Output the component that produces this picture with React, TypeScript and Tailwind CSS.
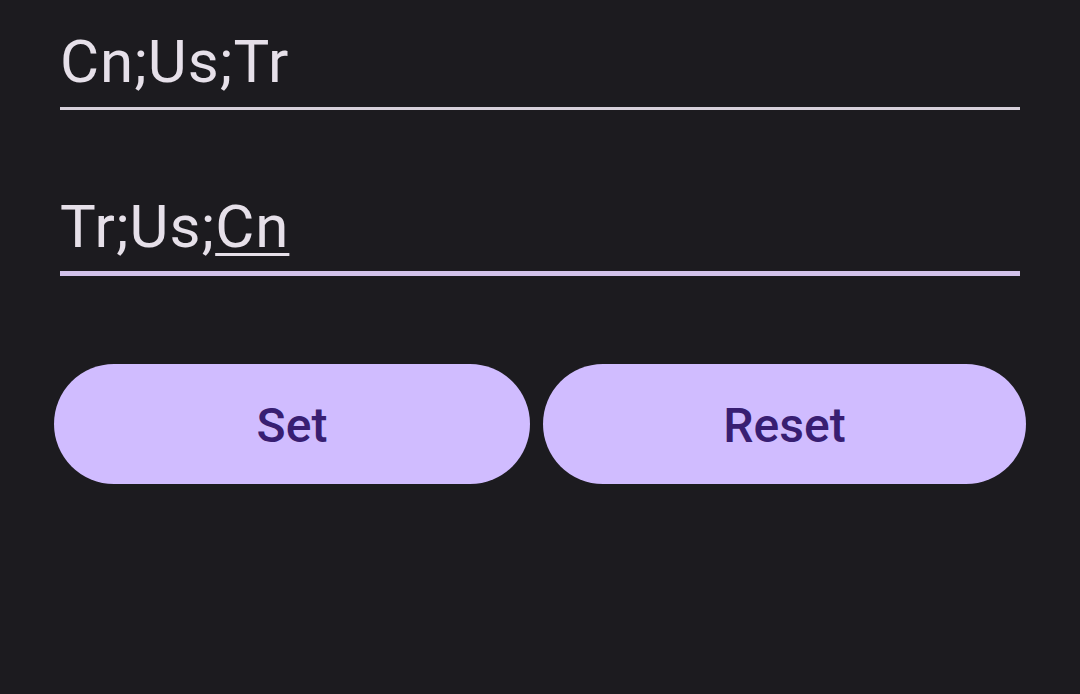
export default function App(): JSX.Element {
  return (
    <div className="min-h-screen bg-[#1c1b1f] px-[60px] pt-[27px] font-['Roboto','Liberation_Sans',sans-serif]">
      <div>
        <div className="text-[60px] leading-[70px] tracking-[1px] text-[#e6e0e9]">Cn;Us;Tr</div>
        <div className="mt-[10px] h-[3px] bg-[#d6d0da]" />
      </div>

      <div className="mt-[82px]">
        <div className="text-[60px] leading-[70px] tracking-[1px] text-[#e6e0e9]">
          Tr;Us;
          <span className="underline decoration-[3px] underline-offset-[6px]">Cn</span>
        </div>
        <div className="mt-[9px] h-[5px] bg-[#d2c2ea]" />
      </div>

      <div className="-mx-[6px] mt-[88px] flex gap-[13px]">
        <button
          type="button"
          className="h-[120px] w-[476px] rounded-full bg-[#d0bcff] pt-[3px] text-[48px] font-medium text-[#381e72]"
        >
          Set
        </button>
        <button
          type="button"
          className="h-[120px] flex-1 rounded-full bg-[#d0bcff] pt-[3px] text-[48px] font-medium text-[#381e72]"
        >
          Reset
        </button>
      </div>
    </div>
  );
}
